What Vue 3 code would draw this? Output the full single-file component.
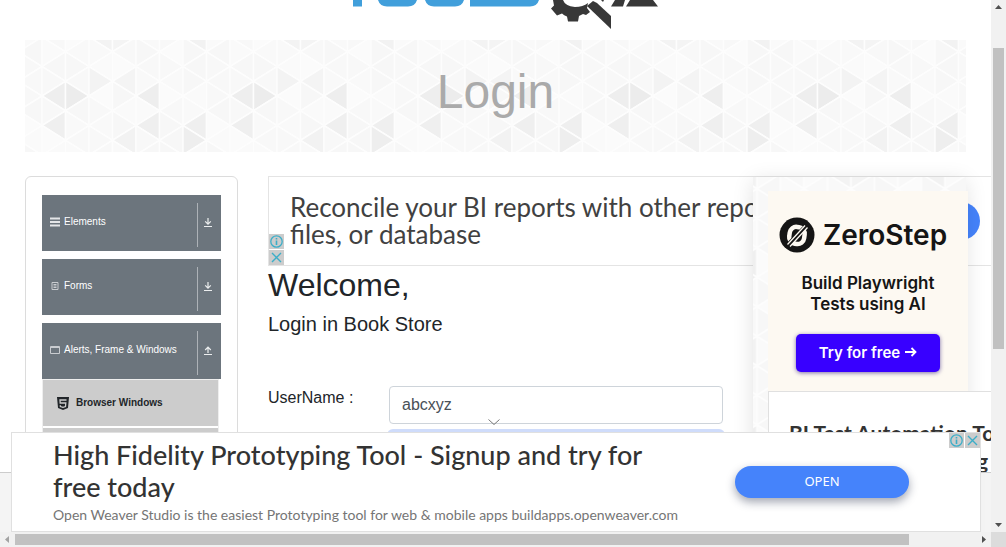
<script setup>
import { ref } from 'vue'

const userName = ref('abcxyz')
const menu = [
  { label: 'Elements', icon: 'list', open: false },
  { label: 'Forms', icon: 'form', open: false },
  { label: 'Alerts, Frame & Windows', icon: 'window', open: true },
]

// Triangular mesh: eight columns of six rows, repeated as a tile.
const COL = 23.5
const ROW = 29.5
const leftShades = { '0-2': '#eeeeee', '0-3': '#efefef', '4-2': '#eeeeee', '4-3': '#efefef', '6-3': '#efefef', '3-4': '#f2f2f2', '3-2': '#f4f4f4', '2-0': '#f3f3f3', '6-0': '#f2f2f2' }
const rightShades = { '1-2': '#ececec', '6-3': '#eeeeee', '2-1': '#f3f3f3', '3-0': '#f4f4f4' }
const soft = ['#f8f8f8', '#fafafa', '#f7f7f7', '#fbfbfb', '#f8f8f8', '#f9f9f9', '#f7f7f7']
const mesh = []
for (let c = -1; c <= 8; c++) {
  const col = (c + 8) % 8
  const x0 = c * COL
  const x1 = x0 + COL
  const h = ROW / 2
  const shift = col % 2 ? -h : 0
  for (let k = -1; k <= 7; k++) {
    const row = (k + 6) % 6
    const y = k * ROW + shift
    const key = `${col}-${row}`
    mesh.push({
      points: `${x0},${y} ${x1},${y - h} ${x1},${y + h}`,
      fill: leftShades[key] || soft[(col * 3 + row * 2) % 7],
    })
    mesh.push({
      points: `${x0},${y} ${x0},${y + ROW} ${x1},${y + h}`,
      fill: rightShades[key] || soft[(col * 2 + row * 3 + 1) % 7],
    })
  }
}
</script>

<template>
  <div class="window">
    <div class="page">
      <header class="logo">
        <svg width="320" height="30" viewBox="340 0 320 30" role="img" aria-label="TOOLS QA">
          <g fill="#419fdb">
            <path d="M353 0h9v6.500h-9zM378 0h39q-2 6.500-9 6.500h-21q-7 0-9-6.500zM425 0h39q-2 6.500-9 6.500h-21q-7 0-9-6.500zM470 0h69q-2 6.500-9 6.500h-60z" />
          </g>
          <g fill="#383838">
            <path d="M553 0h10q2 6 12 7q8 0 13-4l-1 5l3 4l-4 3l-3-1l-4 2l-1 5.500h-10l-1-5q-3-1-5-3l-5 2l-6-7l3-3z" />
            <path d="M593 1L587 6L611 29V16L597 3z" />
            <path d="M615 0h10l-2 6.500h-12zM630 0h23l5 6.500h-32zM601 0l2 2l1-2z" />
          </g>
        </svg>
      </header>

      <div class="banner">
        <svg class="mesh" width="100%" height="100%" aria-hidden="true">
          <defs>
            <pattern id="mesh" patternUnits="userSpaceOnUse" width="188" height="177" patternTransform="translate(17 -3)">
              <polygon v-for="(t, i) in mesh" :key="i" :points="t.points" :fill="t.fill" stroke="#fdfdfd" stroke-width="1.500" />
            </pattern>
          </defs>
          <rect width="100%" height="100%" fill="url(#mesh)" />
        </svg>
        <h1>Login</h1>
      </div>

      <div class="body">
        <nav class="side">
          <div v-for="m in menu" :key="m.label" class="group">
            <button class="group-head" type="button">
              <svg class="lead" width="10" height="10" viewBox="0 0 10 10">
                <path v-if="m.icon === 'list'" d="M0 1.500h10M0 5h10M0 8.500h10" stroke="#e4e6e8" stroke-width="1.800" />
                <path v-else-if="m.icon === 'form'" d="M2 1.500h6v7H2zM3.500 3.500h3M3.500 5h3M3.500 6.500h3" fill="none" stroke="#c9ccd0" />
                <path v-else d="M.5 1.500h9v7h-9zM.5 2.500h9" fill="none" stroke="#c9ccd0" />
              </svg>
              <span class="name">{{ m.label }}</span>
              <span class="toggle">
                <svg width="10" height="10" viewBox="0 0 10 10" fill="none" stroke="#eceeef" stroke-width="1.200">
                  <path v-if="m.open" d="M1 8.500h8M5 7V1.500M2.200 4L5 1.200L7.800 4" />
                  <path v-else d="M1 8.500h8M5 0v6M2.200 3.300L5 6.100l2.800-2.800" />
                </svg>
              </span>
            </button>
            <ul v-if="m.open" class="sub">
              <li>
                <svg width="12" height="13" viewBox="0 0 12 13">
                  <path d="M0 0h12l-1 11l-5 2l-5-2z" fill="#212529" />
                  <path d="M9.500 3H3l.2 3h5.600l-.3 3.500l-2.500.8l-2.600-.8l-.1-1.300" fill="none" stroke="#ccc" stroke-width="1.300" />
                </svg>
                <span>Browser Windows</span>
              </li>
              <li></li>
            </ul>
          </div>
        </nav>

        <main>
          <section class="ad-top">
            <p>Reconcile your BI reports with other reports, files, or database</p>
            <a class="ad-action" href="#" aria-label="Open"></a>
            <div class="badges column">
              <button type="button" aria-label="About this ad">
                <svg width="15" height="15" viewBox="0 0 15 15" fill="none" stroke="#3caec8"><circle cx="7.500" cy="7.500" r="5.700" stroke-width="1.300" /><path d="M7.500 6.500V11M7.500 4v1.500" stroke-width="1.600" /></svg>
              </button>
              <button type="button" aria-label="Close ad">
                <svg width="15" height="15" viewBox="0 0 15 15" stroke="#3caec8"><path d="M3 3l9 9M12 3l-9 9" stroke-width="1.400" /></svg>
              </button>
            </div>
          </section>
          <h2>Welcome,</h2>
          <h5>Login in Book Store</h5>
          <form @submit.prevent>
            <label for="userName">UserName :</label>
            <div class="fields">
              <input id="userName" v-model="userName" type="text" />
              <div class="next-field"></div>
            </div>
          </form>
        </main>
      </div>

      <footer class="foot"></footer>

      <aside class="ad-side">
        <svg class="mesh" width="100%" height="100%" aria-hidden="true">
          <defs>
            <pattern id="mesh-side" href="#mesh" patternTransform="translate(27.500 -3)" />
          </defs>
          <rect width="100%" height="100%" fill="url(#mesh-side)" />
        </svg>
        <div class="zero">
          <div class="zero-brand">
            <svg width="36" height="36" viewBox="0 0 36 36">
              <circle cx="18" cy="18" r="17.500" fill="#151515" />
              <rect x="10.500" y="10" width="15" height="17" rx="6.500" transform="rotate(8 18 18)" fill="none" stroke="#fdf9f2" stroke-width="4.500" />
              <path d="M8 29L28 8" stroke="#151515" stroke-width="4.500" />
              <path d="M8.500 27.500L26 8.500M11 29.500L28.500 10.500" stroke="#fdf9f2" stroke-width="1.300" />
            </svg>
            <span>ZeroStep</span>
          </div>
          <p>Build Playwright<br />Tests using AI</p>
          <button type="button">
            Try for free
            <svg width="13" height="12" viewBox="0 0 13 12" fill="none" stroke="#fff" stroke-width="1.800"><path d="M1 6h10.500M7.500 2l4 4l-4 4" /></svg>
          </button>
        </div>
      </aside>

      <section class="ad-card">
        <h3>BI Test Automation Tool</h3>
        <p>for regression testing</p>
      </section>

      <svg class="chevron" width="14" height="8" viewBox="0 0 14 8" fill="none" stroke="#777"><path d="M1.500 1.500L7 6.500l5.500-5" /></svg>

      <section class="ad-bottom">
        <div class="copy">
          <h3>High Fidelity Prototyping Tool - Signup and try for free today</h3>
          <p>Open Weaver Studio is the easiest Prototyping tool for web &amp; mobile apps buildapps.openweaver.com</p>
        </div>
        <a class="open" href="#">OPEN</a>
        <div class="badges">
          <button type="button" aria-label="About this ad">
            <svg width="15" height="15" viewBox="0 0 15 15" fill="none" stroke="#3caec8"><circle cx="7.500" cy="7.500" r="5.700" stroke-width="1.300" /><path d="M7.500 6.500V11M7.500 4v1.500" stroke-width="1.600" /></svg>
          </button>
          <button type="button" aria-label="Close ad">
            <svg width="15" height="15" viewBox="0 0 15 15" stroke="#3caec8"><path d="M3 3l9 9M12 3l-9 9" stroke-width="1.400" /></svg>
          </button>
        </div>
      </section>
    </div>

    <div class="bar vertical">
      <svg width="15" height="15" viewBox="0 0 15 15"><path d="M4 9h7L7.500 5z" fill="#505050" /></svg>
      <div class="track"><div class="thumb"></div></div>
      <svg width="15" height="15" viewBox="0 0 15 15"><path d="M4 6h7l-3.500 4z" fill="#505050" /></svg>
    </div>
    <div class="bar horizontal">
      <svg width="15" height="15" viewBox="0 0 15 15"><path d="M9 4v7L5 7.500z" fill="#a3a3a3" /></svg>
      <div class="track"><div class="thumb"></div></div>
      <svg width="15" height="15" viewBox="0 0 15 15"><path d="M6 4v7l4-3.500z" fill="#505050" /></svg>
    </div>
    <div class="corner"></div>
  </div>
</template>

<style>
body { background: #fff; }
</style>

<style scoped>
* { box-sizing: border-box; margin: 0; padding: 0; }
svg { display: block; flex: none; }
button { border: 0; font: inherit; cursor: pointer; }
a { text-decoration: none; }
.window {
  display: grid;
  grid-template: minmax(0, 1fr) 15px / minmax(0, 1fr) 15px;
  height: 100vh;
  font-family: "Liberation Sans", Arial, sans-serif;
  color: #212529;
}
.page { position: relative; overflow: hidden; display: flex; flex-direction: column; }
.logo { flex: none; height: 40px; padding-left: 340px; }
.banner { position: relative; flex: none; margin: 0 25px; padding: 24px 0; }
.banner h1 { position: relative; font-size: 48px; line-height: 56px; padding-bottom: 8px; font-weight: 400; text-align: center; color: #aaa; }
.mesh { position: absolute; inset: 0; }
.body { flex: 1; min-height: 0; overflow: hidden; display: flex; gap: 30px; padding: 24px 0 0 25px; }
.side { flex: none; width: 213px; height: 600px; border: 1px solid #dcdcdc; border-radius: 6px; padding: 18px 16px; }
.group { margin-bottom: 8px; }
.group-head { display: flex; align-items: center; width: 100%; height: 56px; padding: 4px 0 0 8px; background: #6c757d; color: #fff; font-size: 10px; }
.name { margin-left: 4px; padding-bottom: 7px; }
.lead { margin-bottom: 6px; }
.toggle { margin-left: auto; display: flex; align-items: center; height: 44px; padding: 0 8px 4px 5px; border-left: 1px solid #adb2b7; }
.sub { list-style: none; margin-right: 2px; border: solid #eee; border-width: 1px 1px 0; }
.sub li { display: flex; align-items: center; gap: 7px; height: 46px; margin-bottom: 2px; padding-left: 14px; background: #ccc; font-size: 10px; font-weight: 700; }
.sub span { padding-bottom: 2px; }
main { flex: 1; min-width: 0; }
.ad-top { position: relative; height: 90px; border: 1px solid #e4e4e4; border-right: 0; padding: 17px 21px; background: #fff; }
.ad-top p { width: 540px; font: 400 26px/27px Lato, "Open Sans", sans-serif; color: #414141; }
.ad-action { position: absolute; right: 11px; top: 25px; width: 140px; height: 38px; border-radius: 19px; background: #4583fb; }
.badges { position: absolute; right: 0; top: 0; display: flex; gap: 1px; }
.badges.column { right: auto; left: 0; top: 57px; flex-direction: column; }
.badges button { background: #ccc; }
h2 { font-size: 32px; line-height: 38px; font-weight: 400; margin-bottom: 8px; }
h5 { font-size: 20px; line-height: 24px; font-weight: 400; }
form { display: flex; margin-top: 50px; }
form label { width: 121px; font-size: 16px; line-height: 24px; }
.fields { width: 334px; }
input { width: 100%; height: 38px; border: 1px solid #ced4da; border-radius: 4px; padding: 0 12px; font: 16px "Liberation Sans", Arial, sans-serif; color: #495057; }
.next-field { height: 38px; margin: 5px -2px 0; border-radius: 6px; background: #cfdcfb; }
.foot { flex: none; height: 60px; border-top: 1px solid #ccc; background: #f4f4f4; }
.ad-side { position: absolute; left: 753px; top: 177px; width: 213px; height: 400px; background: #fff; box-shadow: 0 4px 20px rgba(0, 0, 0, .12); }
.zero { position: relative; width: 200px; height: 300px; margin: 14px 0 0 15px; padding: 26px 0 0; background: #fdf9f2; display: flex; flex-direction: column; align-items: center; font-family: Inter, sans-serif; color: #151515; }
.zero-brand { display: flex; align-items: center; gap: 8px; padding-right: 10px; font-size: 28px; line-height: 36px; font-weight: 600; }
.zero p { margin-top: 20px; font-size: 17px; line-height: 21px; font-weight: 600; text-align: center; }
.zero button { display: flex; align-items: center; justify-content: center; gap: 4px; width: 144px; height: 38px; margin-top: 19px; padding-bottom: 2px; border-radius: 5px; background: #3800ff; color: #fff; font-size: 15px; font-weight: 600; box-shadow: 0 1px 4px rgba(40, 20, 120, .6); }
.ad-card { position: absolute; left: 768px; top: 391px; width: 300px; height: 82px; overflow: hidden; border: 1px solid #e0e0e0; border-bottom-color: #ccc; padding: 27px 20px 0; background: #fff; font: 700 21px/28px Lato, sans-serif; color: #333; }
.ad-card h3 { font: inherit; }
.ad-card p { width: 199px; margin-top: 4px; line-height: 20px; text-align: right; white-space: nowrap; }
.chevron { position: absolute; left: 487px; top: 418px; }
.ad-bottom { position: absolute; left: 11px; right: 10px; bottom: 0; height: 100px; display: flex; align-items: center; border: 1px solid #e0e0e0; padding: 0 71px 0 41px; background: #fff; font-family: Lato, "Open Sans", sans-serif; }
.copy { width: 620px; padding-top: 2px; }
.copy h3 { font-size: 27px; line-height: 32px; font-weight: 500; color: #333; }
.copy p { font-size: 14px; line-height: 24px; color: #757575; white-space: nowrap; }
.open { margin-left: auto; width: 174px; height: 32px; border-radius: 16px; background: #4583fb; color: #fff; font: 13px/31px "Noto Sans", sans-serif; text-align: center; box-shadow: 0 4px 10px rgba(20, 30, 60, .4); }
.bar { display: flex; background: #f1f1f1; }
.vertical { grid-area: 1 / 2; flex-direction: column; }
.horizontal { grid-area: 2 / 1; }
.track { flex: 1; }
.thumb { background: #c1c1c1; }
.vertical .thumb { width: 11px; height: 60%; margin: 33px 2px 0; }
.horizontal .thumb { width: 93%; height: 11px; margin-top: 2px; }
.corner { background: #dcdcdc; }
</style>
